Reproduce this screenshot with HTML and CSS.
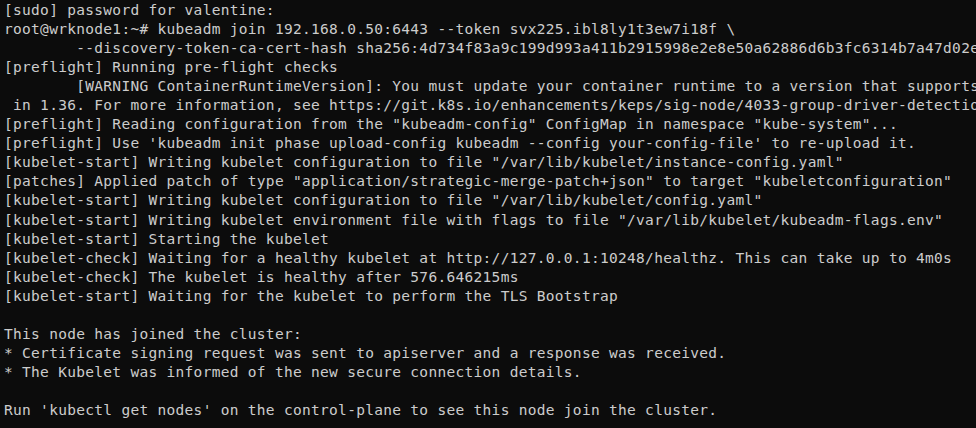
FILE: index.html
```html
<!DOCTYPE html>
<html lang="en">
<head>
<meta charset="utf-8">
<title>Terminal</title>
<link rel="stylesheet" href="styles.css">
</head>
<body>
<pre class="term">[sudo] password for valentine:
root@wrknode1:~# kubeadm join 192.168.0.50:6443 --token svx225.ibl8ly1t3ew7i18f \
        --discovery-token-ca-cert-hash sha256:4d734f83a9c199d993a411b2915998e2e8e50a62886d6b3fc6314b7a47d02e8c
[preflight] Running pre-flight checks
        [WARNING ContainerRuntimeVersion]: You must update your container runtime to a version that supports the CRI method RuntimeConfig. Falling back to using cgroupDriver from kubelet config will be removed
 in 1.36. For more information, see https://git.k8s.io/enhancements/keps/sig-node/4033-group-driver-detection-over-cri
[preflight] Reading configuration from the "kubeadm-config" ConfigMap in namespace "kube-system"...
[preflight] Use 'kubeadm init phase upload-config kubeadm --config your-config-file' to re-upload it.
[kubelet-start] Writing kubelet configuration to file "/var/lib/kubelet/instance-config.yaml"
[patches] Applied patch of type "application/strategic-merge-patch+json" to target "kubeletconfiguration"
[kubelet-start] Writing kubelet configuration to file "/var/lib/kubelet/config.yaml"
[kubelet-start] Writing kubelet environment file with flags to file "/var/lib/kubelet/kubeadm-flags.env"
[kubelet-start] Starting the kubelet
[kubelet-check] Waiting for a healthy kubelet at http://127.0.0.1:10248/healthz. This can take up to 4m0s
[kubelet-check] The kubelet is healthy after 576.646215ms
[kubelet-start] Waiting for the kubelet to perform the TLS Bootstrap

This node has joined the cluster:
* Certificate signing request was sent to apiserver and a response was received.
* The Kubelet was informed of the new secure connection details.

Run 'kubectl get nodes' on the control-plane to see this node join the cluster.</pre>
</body>
</html>
```
FILE: styles.css
```css
html, body {
  margin: 0;
  padding: 0;
  background: #0c0c0c;
  height: 100%;
  overflow: hidden;
}
.term {
  margin: 0;
  padding: 1px 4px 0 4px;
  font-family: "DejaVu Sans Mono", "Liberation Mono", monospace;
  font-size: 14.5px;
  letter-spacing: 0.3px;
  line-height: 19.05px;
  color: #cccccc;
  white-space: pre;
  tab-size: 8;
  overflow: hidden;
}
```
